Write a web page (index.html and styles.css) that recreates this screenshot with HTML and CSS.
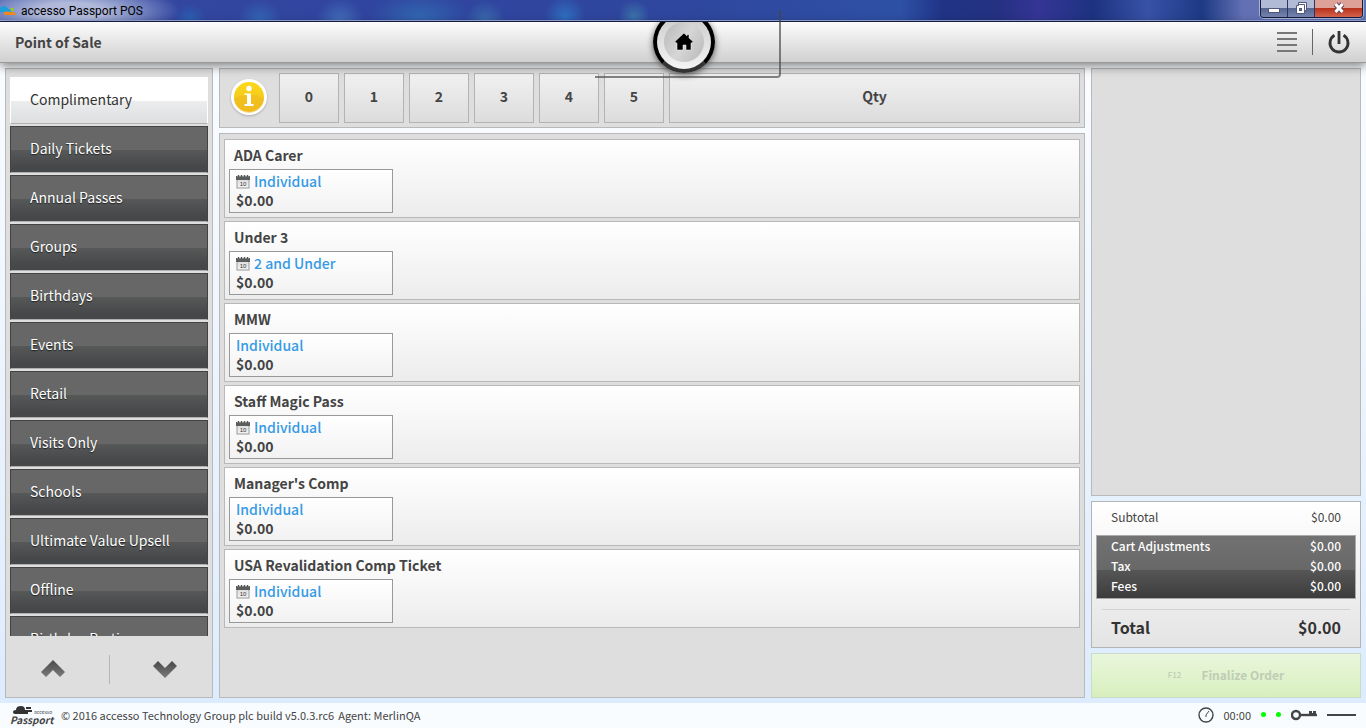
FILE: index.html
```html
<!DOCTYPE html>
<html lang="en">
<head>
<meta charset="utf-8">
<title>accesso Passport POS</title>
<link rel="stylesheet" href="styles.css">
</head>
<body>
<svg class="defs" width="0" height="0" aria-hidden="true">
  <defs>
    <linearGradient id="chev" x1="0" y1="0" x2="0" y2="1"><stop offset="0" stop-color="#484848"/><stop offset="1" stop-color="#7b7b7b"/></linearGradient>
    <linearGradient id="gold" x1="0" y1="0" x2="0" y2="1"><stop offset="0" stop-color="#fcd91a"/><stop offset="1" stop-color="#f1bd1d"/></linearGradient>
    <linearGradient id="page" x1="0" y1="0" x2="0" y2="1"><stop offset="0" stop-color="#ddd"/><stop offset="1" stop-color="#f4f4f4"/></linearGradient>
    <symbol id="cal" viewBox="0 0 14 15">
      <rect x="1" y="5" width="12" height="9" fill="url(#page)" stroke="#999"/>
      <rect x="0" y="2" width="14" height="4" fill="#5a5e5c"/>
      <path d="M2.500 1v2M5.500 1v2M8.500 1v2M11.500 1v2" stroke="#bbb" stroke-width="2"/>
      <path d="M2.500 1v2M5.500 1v2M8.500 1v2M11.500 1v2" stroke="#555"/>
      <text x="7" y="12" text-anchor="middle" class="cal-day">10</text>
    </symbol>
  </defs>
</svg>
<div class="app">
  <header class="titlebar">
    <svg class="app-icon" width="16" height="10" viewBox="0 0 16 10"><path d="M0 6V2Q2 0 4 0q3 0 4 3 3 0 3 3H0z" fill="#1ba0dc"/><path d="M10 2h4v3h-3z" fill="#8fc63f"/><path d="M4 6q3-1 6 0 5-1 6 3H5q-2-1-1-3z" fill="#f08a24"/></svg>
    <span class="window-name">accesso Passport POS</span>
    <div class="window-buttons">
      <button type="button" class="win-btn" aria-label="Minimize"><svg width="14" height="14"><rect x="1.500" y="8.500" width="11" height="4" fill="#fff" stroke="#51587a"/></svg></button>
      <button type="button" class="win-btn" aria-label="Restore"><svg width="14" height="14"><path d="M4.500 2.500h8v8h-2v3h-8v-8h2z" fill="#fff" stroke="#51587a"/><rect x="5.500" y="8.500" width="2" height="2" fill="#6a7799" stroke="#51587a"/><path d="M4.500 4.500h6v6" fill="none" stroke="#51587a"/></svg></button>
      <button type="button" class="win-btn close" aria-label="Close"><svg width="14" height="14"><path d="M3.500 4l7 8M10.500 4l-7 8" stroke="#6b4353" stroke-width="5"/><path d="M3.500 4l7 8M10.500 4l-7 8" stroke="#fff" stroke-width="3"/></svg></button>
    </div>
  </header>

  <div class="toolbar">
    <h1 class="screen-name">Point of Sale</h1>
    <div class="home-holder">
      <button type="button" class="home" aria-label="Home"><span class="home-disc"><svg width="18" height="18" viewBox="0 0 18 18"><path d="M9 0l3 3V1.500h2V5l4 3.500-1 1.500h-1v7h-5v-5H8v5H2v-7H1L0 8.500z" fill="#000" stroke="#fff" stroke-width=".5"/></svg></span></button>
    </div>
    <div class="tools">
      <button type="button" class="plain" aria-label="Menu"><svg width="22" height="22"><path d="M1 2h20M1 8h20M1 14h20M1 20h20" stroke="#777" stroke-width="2"/></svg></button>
      <span class="rule"></span>
      <button type="button" class="plain" aria-label="Log out"><svg width="24" height="26"><path d="M7.500 6.200a9 9 0 1 0 9 0" fill="none" stroke="#333" stroke-width="2.800"/><path d="M12 2v13" stroke="#333" stroke-width="2.800"/></svg></button>
    </div>
  </div>

  <main class="workspace">
    <nav class="panel sidebar" aria-label="Categories">
      <div class="categories">
        <button type="button" class="cat selected">Complimentary</button>
        <button type="button" class="cat">Daily Tickets</button>
        <button type="button" class="cat">Annual Passes</button>
        <button type="button" class="cat">Groups</button>
        <button type="button" class="cat">Birthdays</button>
        <button type="button" class="cat">Events</button>
        <button type="button" class="cat">Retail</button>
        <button type="button" class="cat">Visits Only</button>
        <button type="button" class="cat">Schools</button>
        <button type="button" class="cat">Ultimate Value Upsell</button>
        <button type="button" class="cat">Offline</button>
        <button type="button" class="cat">Birthday Parties</button>
      </div>
      <div class="pager">
        <button type="button" class="plain" aria-label="Scroll up"><svg width="26" height="20"><path d="M13 1l12 12-5 5-7-7-7 7-5-5z" fill="url(#chev)"/></svg></button>
        <span class="pager-rule"></span>
        <button type="button" class="plain" aria-label="Scroll down"><svg width="26" height="20"><path d="M13 19L1 7l5-5 7 7 7-7 5 5z" fill="url(#chev)"/></svg></button>
      </div>
    </nav>

    <section class="center">
      <div class="panel quantities">
        <button type="button" class="plain info" aria-label="Information"><svg width="40" height="40" viewBox="0 0 40 40"><circle cx="20" cy="20" r="18" fill="#fff"/><circle cx="20" cy="20" r="15" fill="url(#gold)"/><path d="M5 21q15-6 30 0a15 15 0 0 1-30 0z" fill="#eeb81f" opacity=".5"/><circle cx="20" cy="11.500" r="2.700" fill="#fff"/><path d="M15.500 16.500H22v10.500h2.500V29h-9v-2H18v-9h-2.500z" fill="#fff"/></svg></button>
        <button type="button" class="qty">0</button>
        <button type="button" class="qty">1</button>
        <button type="button" class="qty">2</button>
        <button type="button" class="qty">3</button>
        <button type="button" class="qty">4</button>
        <button type="button" class="qty">5</button>
        <button type="button" class="qty custom">Qty</button>
      </div>
      <div class="panel products">
        <article class="product"><h2 class="product-name">ADA Carer</h2><button type="button" class="ticket"><span class="kind"><svg class="cal" width="14" height="15"><use href="#cal"/></svg>Individual</span><span class="price">$0.00</span></button></article>
        <article class="product"><h2 class="product-name">Under 3</h2><button type="button" class="ticket"><span class="kind"><svg class="cal" width="14" height="15"><use href="#cal"/></svg>2 and Under</span><span class="price">$0.00</span></button></article>
        <article class="product"><h2 class="product-name">MMW</h2><button type="button" class="ticket"><span class="kind">Individual</span><span class="price">$0.00</span></button></article>
        <article class="product"><h2 class="product-name">Staff Magic Pass</h2><button type="button" class="ticket"><span class="kind"><svg class="cal" width="14" height="15"><use href="#cal"/></svg>Individual</span><span class="price">$0.00</span></button></article>
        <article class="product"><h2 class="product-name">Manager's Comp</h2><button type="button" class="ticket"><span class="kind">Individual</span><span class="price">$0.00</span></button></article>
        <article class="product"><h2 class="product-name">USA Revalidation Comp Ticket</h2><button type="button" class="ticket"><span class="kind"><svg class="cal" width="14" height="15"><use href="#cal"/></svg>Individual</span><span class="price">$0.00</span></button></article>
      </div>
    </section>

    <aside class="order">
      <div class="panel cart"></div>
      <dl class="totals">
        <div class="line subtotal"><dt>Subtotal</dt><dd>$0.00</dd></div>
        <div class="extras">
          <div class="line"><dt>Cart Adjustments</dt><dd>$0.00</dd></div>
          <div class="line"><dt>Tax</dt><dd>$0.00</dd></div>
          <div class="line"><dt>Fees</dt><dd>$0.00</dd></div>
        </div>
        <div class="line total"><dt>Total</dt><dd>$0.00</dd></div>
      </dl>
      <button type="button" class="finalize" disabled><span class="shortcut">F12</span>Finalize Order</button>
    </aside>
  </main>

  <footer class="statusbar">
    <div class="logo">
      <svg class="cloud" width="20" height="10" viewBox="0 0 20 10"><path d="M3 9Q0 9 0 7q0-2 3-2 0-4 5-4 4 0 4 4h3v4z" fill="#333"/><path d="M13 3h5M14 6h5" stroke="#333" stroke-width="2"/></svg>
      <span class="logo-small">accesso</span>
      <span class="logo-name">Passport</span>
    </div>
    <span>© 2016 accesso Technology Group plc build v5.0.3.rc6</span>
    <span class="agent">Agent: MerlinQA</span>
    <div class="status">
      <svg width="16" height="16"><circle cx="8" cy="8" r="7" fill="none" stroke="#444" stroke-width="1.400"/><path d="M8 10V8l3-4" fill="none" stroke="#444"/></svg>
      <span class="clock">00:00</span>
      <span class="dot"></span><span class="dot"></span>
      <svg class="key" width="26" height="12"><circle cx="5" cy="6" r="4" fill="none" stroke="#444" stroke-width="2.400"/><path d="M9 6h17" stroke="#444" stroke-width="2.400"/><path d="M18 5V2h3v2h1V2h3v3z" fill="#444"/></svg>
      <span class="dash"></span>
    </div>
  </footer>
</div>
</body>
</html>
```
FILE: styles.css
```css
* { box-sizing: border-box; }
body { margin: 0; font-family: "Noto Sans CJK SC", "Noto Sans", sans-serif; font-size: 14px; color: #444; }
button { font: inherit; color: inherit; margin: 0; padding: 0; }
h1, h2, dl, dd { margin: 0; font-size: inherit; font-weight: inherit; }
.defs { position: absolute; }
.app { height: 100vh; display: flex; flex-direction: column; overflow: hidden; background: linear-gradient(#fdfeff, #dbebfe); }
.plain { border: 0; background: none; display: flex; }

.titlebar { position: relative; height: 22px; flex: none; display: flex; align-items: center; gap: 5px; border-bottom: 1px solid #1a2149; box-shadow: inset 0 -1px #9aa9dc; color: #000;
  background:
    radial-gradient(ellipse 110px 28px at 70px 11px, #b0b9da 30%, rgba(160,172,214,.6) 65%, rgba(160,172,214,0) 100%),
    radial-gradient(circle at 190px 20px, rgba(40,103,184,.8), transparent 16px),
    radial-gradient(circle at 260px 22px, rgba(53,119,194,.7), transparent 22px),
    radial-gradient(circle at 340px 22px, rgba(74,127,196,.7), transparent 24px),
    radial-gradient(ellipse 50px 24px at 420px 16px, rgba(50,110,180,.8), transparent),
    radial-gradient(circle at 485px 20px, rgba(61,120,176,.7), transparent 20px),
    radial-gradient(circle at 565px 16px, rgba(46,114,194,.9), transparent 20px),
    radial-gradient(circle at 634px 16px, rgba(60,118,171,.9), transparent 16px),
    linear-gradient(90deg, #3548a0 0, #3045a0 30%, #2f479e 50%, #2e50a5 66%, #203486 69%, #243181 73%, #353596 76%, #1d3380 80%, #3852a6 84%, #1d3a84 88%, #6370b4 91%, #6075b5 100%); }
.window-name { font-family: Roboto, sans-serif; font-size: 12px; }
.window-buttons { align-self: flex-start; margin-left: auto; margin-right: 3px; height: 18px; display: flex; border: 1px solid #161c42; border-top: 0; border-radius: 0 0 4px 4px; box-shadow: 0 0 0 1px #a8b2d6; overflow: hidden; }
.win-btn { width: 27px; display: flex; justify-content: center; border: 0; border-right: 1px solid #2b3763; background: linear-gradient(#b1bbd6 0 45%, #53648f 46%, #7686b0); }
.win-btn.close { width: 47px; border-right: 0; background: linear-gradient(#dda198 0 45%, #b72f18 46%, #d8644d); }

.toolbar { position: relative; z-index: 2; height: 41px; flex: none; display: flex; align-items: center; padding: 0 15px; background: linear-gradient(#fcfcfc, #d0d0d0); border-bottom: 1px solid #999; box-shadow: 0 3px 10px rgba(0,0,0,.5); }
.screen-name { flex: 1; font-size: 14px; font-weight: 700; }
.home-holder { position: absolute; top: 0; left: calc(50% - 49px); width: 100px; height: 62px; overflow: hidden; display: flex; justify-content: center; align-items: flex-end; padding-bottom: 11px; }
.home { width: 62px; height: 62px; flex: none; border: 4px solid #000; border-bottom-color: #333; border-radius: 50%; background: linear-gradient(#ccc, #f4f4f4); display: flex; align-items: center; justify-content: center; box-shadow: 0 2px 6px #555; }
.home-disc { width: 40px; height: 40px; border-radius: 50%; background: linear-gradient(120deg, #b8b8b8, #d6d6d6 50%, #b8b8b8); display: flex; align-items: center; justify-content: center; }
.tools { display: flex; align-items: center; gap: 14px; }
.rule { width: 1px; height: 26px; background: #666; }

/* Raised edge behind the home button */
.toolbar::after { content: ""; position: absolute; top: -12px; bottom: -16px; left: calc(50% - 88px); width: 184px; border: 0 solid rgba(70,70,70,.65); border-width: 0 2px 2px 0; border-radius: 0 0 4px; pointer-events: none; }

.panel { background: #dedede; border: 1px solid #b9b9b9; }
.workspace { flex: 1; min-height: 0; display: grid; grid-template-columns: 208px 1fr 270px; gap: 6px; padding: 5px; }
.sidebar { display: flex; flex-direction: column; min-height: 0; padding: 8px 4px 0; }
.categories { flex: 1; min-height: 0; overflow: hidden; display: flex; flex-direction: column; gap: 2px; }
.cat { flex: none; height: 47px; padding: 0 19px 4px; text-align: left; color: #fff; border: 1px solid #434343; border-bottom-color: #b0b0b0; background: linear-gradient(#666766 0 50%, #575858 51%, #464749 90%); text-shadow: 0 1px 1px #222; }
.cat.selected { color: #333; border-color: #fff; border-bottom-color: #b0b0b0; background: linear-gradient(#fff 50%, #eceded 51%, #dddee0); text-shadow: none; }
.pager { flex: none; height: 61px; display: flex; align-items: center; justify-content: space-between; padding: 5px 30px 0; }
.pager-rule { width: 1px; height: 29px; background: #b5b5b5; }

.center { display: flex; flex-direction: column; gap: 5px; min-width: 0; min-height: 0; }
.quantities { height: 60px; flex: none; display: flex; gap: 5px; padding: 4px; }
.info { width: 50px; padding-bottom: 2px; align-items: center; justify-content: center; filter: drop-shadow(0 1px 1px #aaa); }
.qty { width: 60px; height: 50px; padding-bottom: 5px; border: 1px solid #b1b3b6; background: linear-gradient(#f1f1f1, #dcdcdc); font-weight: 700; }
.qty.custom { flex: 1; }
.products { flex: 1; min-height: 0; overflow: hidden; padding: 5px 4px; display: flex; flex-direction: column; gap: 3px; }
.product { flex: none; height: 79px; padding: 4px; border: 1px solid #b9b9b9; background: linear-gradient(#fff, #ececec); }
.product-name { padding: 0 5px 2px; height: 25px; line-height: 23px; font-weight: 700; }
.ticket { width: 164px; height: 44px; padding: 2px 6px; border: 1px solid #999; background: linear-gradient(#fff, #f2f2f2); display: flex; flex-direction: column; text-align: left; font-weight: 500; line-height: 19px; }
.kind { color: #359ae5; display: flex; align-items: center; gap: 4px; }
.price { font-weight: 700; }
.cal-day { font: 6px "Liberation Sans", sans-serif; fill: #333; }

.order { display: flex; flex-direction: column; gap: 5px; min-height: 0; }
.cart { flex: 1; }
.totals { flex: none; height: 147px; padding: 0 4px; border: 1px solid #b5b5b5; background: linear-gradient(#fff, #e4e4e4); font-size: 12px; }
.line { display: flex; justify-content: space-between; align-items: center; height: 20px; padding: 0 14px 4px; }
.subtotal { height: 33px; padding: 0 15px 4px; }
.extras { height: 64px; padding-top: 1px; border: 1px solid #aaa; background: linear-gradient(#727272, #686868 54%, #565656 55%, #3c3c3c); color: #fff; font-weight: 500; }
.total { margin: 10px 6px 0; padding: 0 9px 4px; height: 38px; border-top: 1px solid #d2d2d2; font-size: 16px; font-weight: 700; color: #333; }
.finalize { flex: none; height: 45px; padding-bottom: 2px; border: 1px solid #cbdcc4; background: linear-gradient(#e9f6dd 0, #e0f3cc 54%, #d8eebd); color: #bfcdb6; font-size: 12px; font-weight: 700; display: flex; align-items: center; justify-content: center; gap: 20px; }
.shortcut { font-size: 8px; font-weight: 500; }

.statusbar { flex: none; height: 25px; display: flex; align-items: center; padding: 0 10px 2px; background: #f9fcff; font-size: 11px; }
.logo { position: relative; width: 51px; height: 23px; display: flex; align-items: flex-end; }
.cloud { position: absolute; top: 2px; left: 3px; }
.logo-small { position: absolute; top: 5px; left: 24px; font-size: 5px; line-height: 8px; }
.logo-name { font-size: 10px; line-height: 12px; font-weight: 700; font-style: italic; }
.agent { margin-left: 4px; }
.status { margin-left: auto; display: flex; align-items: center; gap: 10px; }
.dot { width: 5px; height: 5px; border-radius: 50%; background: #0f0; }
.dash { width: 29px; height: 2px; background: #444; }
```
